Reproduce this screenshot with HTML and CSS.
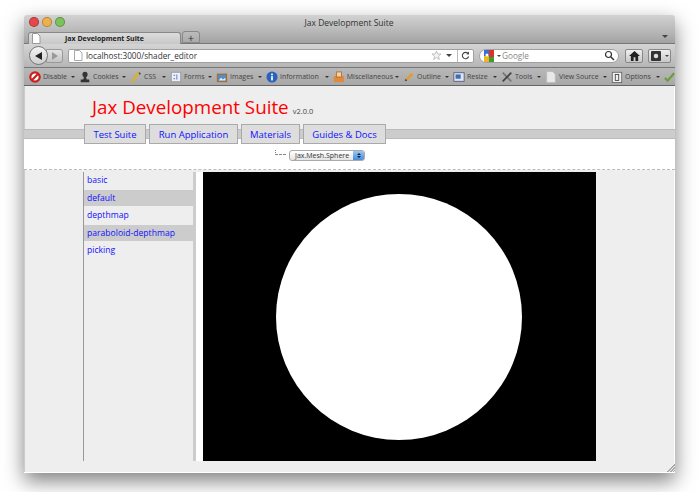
FILE: index.html
```html
<!DOCTYPE html>
<html lang="en">
<head>
  <meta charset="UTF-8" />
  <title>Jax Development Suite</title>
  <link rel="stylesheet" href="styles.css">
</head>
<body>
  <div class="window">
    <div class="titlebar">
      <div class="lights"><span class="light red"></span><span class="light amber"></span><span class="light green"></span></div>
      <div class="win-title">Jax Development Suite</div>
    </div>
    <div class="tabstrip">
      <div class="tab">
        <svg class="page-icon" width="10" height="11" viewBox="0 0 10 11"><path d="M1.500.5h5L9 3v7.500H1.500z" fill="#fff" stroke="#999"/></svg>
        <span class="tab-label">Jax Development Suite</span>
      </div>
      <div class="newtab">+</div>
      <div class="tab-menu"></div>
    </div>
    <div class="navbar">
      <div class="backfwd">
        <div class="back"><svg width="10" height="10" viewBox="0 0 10 10"><path d="M8 1v8L1 5z" fill="#222"/></svg></div>
        <div class="fwd"><svg width="8" height="8" viewBox="0 0 8 8"><path d="M1 0v8l6-4z" fill="#999"/></svg></div>
      </div>
      <div class="urlbar">
        <svg class="page-icon" width="10" height="11" viewBox="0 0 10 11"><path d="M1.500.5h5L9 3v7.500H1.500z" fill="#fff" stroke="#aaa"/></svg>
        <span class="url">localhost:3000/shader_editor</span>
        <svg width="11" height="11" viewBox="0 0 11 11"><path d="M5.500 1l1.300 3h3.200L7.500 6.200l.9 3.300-2.900-1.900-2.900 1.900.9-3.300L1 4h3.200z" fill="#f4f4f4" stroke="#aaa" stroke-width=".7"/></svg>
        <span class="caret"></span>
        <span class="reload"><svg width="9" height="9" viewBox="0 0 9 9"><path d="M7 2.500A3.200 3.200 0 1 0 7.600 5.500" fill="none" stroke="#444" stroke-width="1.100"/><path d="M5.200 3.200L8 3.600V.6z" fill="#444"/></svg></span>
      </div>
      <div class="search">
        <svg width="12" height="12" viewBox="0 0 12 12"><rect x="1" width="5" height="6" fill="#3a6fd8"/><rect x="6" width="5" height="7" fill="#d8352a"/><rect x="1" y="6" width="5" height="6" fill="#f0b428"/><rect x="6" y="7" width="5" height="5" fill="#3f9c35"/><circle cx="4" cy="5" r="1.500" fill="#fff"/></svg>
        <span class="caret small"></span>
        <span class="search-text">Google</span>
        <svg class="lens" width="11" height="11" viewBox="0 0 11 11"><circle cx="4.500" cy="4.500" r="3" fill="none" stroke="#333" stroke-width="1.200"/><path d="M7 7l3 3" stroke="#333" stroke-width="1.500"/></svg>
      </div>
      <div class="navbtn home"><svg width="11" height="10" viewBox="0 0 12 11"><path d="M6 0L0 5.500h2V11h3V7h2v4h3V5.500h2z" fill="#222"/></svg></div>
      <div class="navbtn addon"><svg width="10" height="10" viewBox="0 0 11 11"><rect width="11" height="11" rx="1" fill="#333"/><circle cx="5.500" cy="5.500" r="2.500" fill="#ddd"/></svg><span class="caret small"></span></div>
    </div>
    <div class="devbar">
      <div class="dev w-disable"><svg width="12" height="12" viewBox="0 0 14 14"><circle cx="7" cy="7" r="5.500" fill="#fff" stroke="#c8231c" stroke-width="2.600"/><path d="M3 11l8-8" stroke="#c8231c" stroke-width="2.600"/></svg><span>Disable</span><i></i></div>
      <div class="dev w-cookies"><svg width="12" height="12" viewBox="0 0 14 14"><circle cx="7" cy="4" r="3" fill="#333"/><path d="M6 6h2l1 4h3v3H2v-3h3z" fill="#333"/></svg><span>Cookies</span><i></i></div>
      <div class="dev w-css"><svg width="12" height="12" viewBox="0 0 14 14"><path d="M2 13L10 2" stroke="#e0b020" stroke-width="2.400"/><path d="M10 1l3 2-2 2z" fill="#555"/><path d="M3 4l1 1M8 10l1 1" stroke="#c9a020"/></svg><span>CSS</span><i></i></div>
      <div class="dev w-forms"><svg width="12" height="12" viewBox="0 0 14 14"><rect x="1.500" y="1.500" width="11" height="11" fill="#eef" stroke="#999"/><path d="M4 5h2M4 9h2M8 4v6" stroke="#446fb0"/></svg><span>Forms</span><i></i></div>
      <div class="dev w-images"><svg width="12" height="12" viewBox="0 0 14 14"><rect x="1" y="3" width="12" height="10" fill="#a86b2c"/><rect x="2.500" y="4.500" width="9" height="7" fill="#4f8fd0"/><path d="M3 11l3-3 2 2 3-2v3z" fill="#e6eef5"/></svg><span>Images</span><i></i></div>
      <div class="dev w-info"><svg width="12" height="12" viewBox="0 0 14 14"><circle cx="7" cy="7" r="6.500" fill="#2a62c0"/><rect x="6" y="6" width="2" height="5" fill="#fff"/><rect x="6" y="3" width="2" height="2" fill="#fff"/></svg><span>Information</span><i></i></div>
      <div class="dev w-misc"><svg width="12" height="12" viewBox="0 0 14 14"><rect x="1" y="6" width="12" height="7" fill="#e08a3c"/><rect x="4" y="1" width="6" height="6" fill="#f2d2a8" stroke="#b06a2a"/></svg><span>Miscellaneous</span><i></i></div>
      <div class="dev w-outline"><svg width="12" height="12" viewBox="0 0 14 14"><path d="M2 12l1-3 7-7 2 2-7 7z" fill="#e79a2c"/><path d="M2 12l1-3 2 2z" fill="#444"/></svg><span>Outline</span><i></i></div>
      <div class="dev w-resize"><svg width="12" height="12" viewBox="0 0 14 14"><rect x="1" y="2" width="12" height="10" fill="#dfe6f2" stroke="#557"/><rect x="3" y="4" width="6" height="5" fill="#3a70b8"/></svg><span>Resize</span><i></i></div>
      <div class="dev w-tools"><svg width="12" height="12" viewBox="0 0 14 14"><path d="M2 2l10 10" stroke="#777" stroke-width="2"/><path d="M12 2L2 12" stroke="#444" stroke-width="2"/></svg><span>Tools</span><i></i></div>
      <div class="dev w-source"><svg width="12" height="12" viewBox="0 0 12 14"><path d="M1 .5h7L11 4v9.500H1z" fill="#e8e8e8" stroke="#bbb"/></svg><span>View Source</span><i></i></div>
      <div class="dev w-options"><svg width="12" height="12" viewBox="0 0 12 14"><rect x=".5" y="1.500" width="11" height="12" fill="#eee" stroke="#666"/><rect x="4" y="4" width="4" height="7" fill="none" stroke="#444"/></svg><span>Options</span><i></i></div>
      <svg class="check" width="12" height="12" viewBox="0 0 12 12"><path d="M1 7l3 3 7-8" fill="none" stroke="#6a9f35" stroke-width="2.400"/></svg>
    </div>
    <div class="page">
      <header class="head">
        <h1>Jax Development Suite</h1>
        <small>v2.0.0</small>
      </header>
      <nav class="menu">
        <a class="menu-item w-test">Test Suite</a>
        <a class="menu-item w-run">Run Application</a>
        <a class="menu-item w-mat">Materials</a>
        <a class="menu-item w-docs">Guides &amp; Docs</a>
      </nav>
      <div class="picker">
        <span class="tree"></span>
        <div class="select"><span>Jax.Mesh.Sphere</span><b class="stepper"><i class="up"></i><i class="down"></i></b></div>
      </div>
      <div class="main">
        <ul class="list">
          <li>basic</li>
          <li class="on">default</li>
          <li>depthmap</li>
          <li class="on">paraboloid-depthmap</li>
          <li>picking</li>
        </ul>
        <div class="gutter"></div>
        <div class="canvas"><div class="ball"></div></div>
      </div>
      <div class="grip"></div>
    </div>
  </div>
</body>
</html>
```

FILE: styles.css
```css
html, body {
  margin: 0;
  height: 492px;
  overflow: hidden;
  background: #fff;
}
body {
  padding: 15px 25px 0 24px;
  box-sizing: border-box;
  font-family: "Open Sans", "DejaVu Sans", sans-serif;
}
.window {
  height: 458px;
  display: flex;
  flex-direction: column;
  border-radius: 3px 3px 0 0;
  box-shadow: 0 8px 20px rgba(0,0,0,0.5);
  overflow: hidden;
}
.titlebar {
  height: 16px;
  flex: none;
  display: flex;
  position: relative;
  background: linear-gradient(#d2d2d2, #b8b8b8);
}
.lights {
  display: flex;
  gap: 4px;
  padding: 2px 0 0 5px;
}
.light {
  width: 10px;
  height: 10px;
  box-sizing: border-box;
  border-radius: 50%;
  border: 1px solid rgba(0,0,0,0.25);
  margin-right: -1px;
}
.red { background: #e5484a; }
.amber { background: #f0b04a; }
.green { background: #7cc25c; }
.win-title {
  position: absolute;
  left: 0;
  right: 0;
  top: 1px;
  padding-right: 1px;
  text-align: center;
  font-size: 8.500px;
  line-height: 13px;
  color: #333;
}
.tabstrip {
  height: 12px;
  flex: none;
  display: flex;
  align-items: flex-end;
  gap: 1px;
  padding-left: 4px;
  position: relative;
  background: linear-gradient(#b8b8b8, #a2a2a2);
  border-bottom: 1px solid #777;
}
.tab {
  width: 153px;
  height: 12px;
  margin-bottom: -1px;
  display: flex;
  align-items: center;
  gap: 24px;
  padding-left: 2px;
  box-sizing: border-box;
  background: linear-gradient(#dcdcdc, #c8c8c8);
  border: 1px solid #888;
  border-bottom: 0;
  border-radius: 3px 3px 0 0;
}
.tab-label {
  font-size: 7px;
  font-weight: 700;
  color: #222;
}
.newtab {
  width: 18px;
  height: 12px;
  font-size: 11px;
  line-height: 11px;
  text-align: center;
  color: #333;
  box-sizing: border-box;
  background: linear-gradient(#bcbcbc, #aaa);
  border: 1px solid #888;
  border-radius: 3px 3px 0 0;
}
.tab-menu {
  position: absolute;
  right: 7px;
  bottom: 5px;
  border: 3px solid transparent;
  border-top-color: #444;
  border-bottom: 0;
}
.navbar {
  height: 24px;
  flex: none;
  display: flex;
  align-items: center;
  padding-left: 5px;
  background: linear-gradient(#d4d4d4, #b6b6b6);
  border-bottom: 1px solid #777;
  box-sizing: border-box;
}
.backfwd {
  display: flex;
  align-items: center;
}
.back {
  width: 19px;
  height: 19px;
  box-sizing: border-box;
  border-radius: 50%;
  display: flex;
  align-items: center;
  justify-content: center;
  background: linear-gradient(#f4f4f4, #cfcfcf);
  border: 1px solid #777;
  position: relative;
  z-index: 1;
}
.fwd {
  width: 17px;
  height: 14px;
  margin-left: -2px;
  display: flex;
  align-items: center;
  justify-content: center;
  background: linear-gradient(#e4e4e4, #c4c4c4);
  border: 1px solid #999;
  border-radius: 0 3px 3px 0;
  box-sizing: border-box;
}
.urlbar {
  width: 406px;
  height: 14px;
  margin-left: 5px;
  display: flex;
  align-items: center;
  padding: 0 1px 0 4px;
  box-sizing: border-box;
  background: #fff;
  border: 1px solid #a0a0a0;
  border-radius: 2px;
}
.url {
  flex: 1;
  margin-left: 3px;
  font-size: 8.200px;
  color: #333;
}
.caret {
  border: 3px solid transparent;
  border-top-color: #444;
  border-bottom: 0;
  margin: 0 5px 0 4px;
}
.caret.small {
  margin: 0 0 0 2px;
  border-width: 2px;
  border-bottom: 0;
}
.reload {
  height: 12px;
  display: flex;
  align-items: center;
  padding: 0 2px 0 3px;
  border-left: 1px solid #bbb;
}
.search {
  width: 140px;
  height: 14px;
  margin-left: 5px;
  display: flex;
  align-items: center;
  padding: 0 3px;
  box-sizing: border-box;
  background: #fff;
  border: 1px solid #a0a0a0;
  border-radius: 7px;
}
.search-text {
  flex: 1;
  margin-left: 1px;
  font-size: 8.200px;
  color: #888;
}
.navbtn {
  height: 14px;
  margin-left: 5px;
  display: flex;
  align-items: center;
  justify-content: center;
  gap: 2px;
  box-sizing: border-box;
  background: linear-gradient(#efefef, #c8c8c8);
  border: 1px solid #888;
  border-radius: 2px;
}
.home { width: 18px; margin-left: 6px; }
.addon { width: 23px; }
.devbar {
  height: 18px;
  flex: none;
  display: flex;
  align-items: center;
  padding: 0 0 0 5px;
  box-sizing: border-box;
  background: linear-gradient(#b8b8b8, #a8a8a8);
  border-bottom: 1px solid #666;
}
.dev {
  display: flex;
  align-items: center;
  gap: 2px;
  flex: none;
  white-space: nowrap;
  font-size: 7px;
  color: #444;
}
.dev i {
  margin-left: auto;
  margin-right: 4px;
  border: 2px solid transparent;
  border-top-color: #333;
  border-bottom: 0;
}
.w-disable { width: 50px; }
.w-cookies { width: 51px; }
.w-css { width: 40px; }
.w-forms { width: 46px; }
.w-images { width: 50px; }
.w-info { width: 67px; }
.w-misc { width: 70px; }
.w-outline { width: 50px; }
.w-resize { width: 48px; }
.w-tools { width: 44px; }
.w-source { width: 66px; }
.w-options { width: 53px; }
.page {
  flex: 1;
  min-height: 0;
  position: relative;
  display: flex;
  flex-direction: column;
  background: #eee;
  border-bottom: 1px solid #fff;
  box-shadow: inset 1px 0 0 #ccc, inset -1px 0 0 #fff;
}
.head {
  height: 43px;
  flex: none;
  padding: 9px 0 0 68px;
  box-sizing: border-box;
  display: flex;
  align-items: baseline;
  gap: 4px;
}
h1 {
  margin: 0;
  font-size: 18.800px;
  line-height: 24px;
  font-weight: 400;
  color: #f00;
}
small {
  font-size: 7.500px;
  color: #444;
}
.menu {
  height: 10px;
  flex: none;
  padding-left: 60px;
  display: flex;
  gap: 3px;
  position: relative;
  z-index: 1;
  background: #ccc;
  border-top: 1px solid #bbb;
  border-bottom: 1px solid #bbb;
  box-sizing: border-box;
}
.menu-item {
  height: 20px;
  margin-top: -6px;
  line-height: 20px;
  text-align: center;
  font-size: 9.500px;
  color: #11f;
  background: #ddd;
  border: 1px solid #aaa;
  box-sizing: border-box;
}
.w-test { width: 62px; }
.w-run { width: 89px; }
.w-mat { width: 59px; }
.w-docs { width: 83px; }
.picker {
  height: 31px;
  flex: none;
  padding: 11px 0 0 251px;
  box-sizing: border-box;
  background: #fff;
  border-bottom: 1px dashed #bbb;
  display: flex;
  align-items: flex-start;
  gap: 3px;
}
.tree {
  width: 11px;
  height: 5px;
  box-sizing: border-box;
  border-left: 1px dotted #888;
  border-bottom: 1px dashed #888;
}
.select {
  width: 76px;
  height: 11px;
  display: flex;
  align-items: center;
  justify-content: space-between;
  font-size: 7px;
  color: #333;
  box-sizing: border-box;
  padding-left: 5px;
  background: linear-gradient(#fff, #e4e4e4);
  border: 1px solid #aaa;
  border-radius: 3px;
  overflow: hidden;
}
.stepper {
  width: 11px;
  height: 11px;
  display: flex;
  flex-direction: column;
  align-items: center;
  justify-content: center;
  gap: 1px;
  background: linear-gradient(#a4ccf4, #3f84dc);
}
.stepper i {
  border: 2px solid transparent;
}
.stepper .up { border-bottom-color: #123; border-top: 0; }
.stepper .down { border-top-color: #123; border-bottom: 0; }
.main {
  flex: 1;
  min-height: 0;
  display: flex;
  padding: 2px 0 11px 59px;
}
.list {
  width: 109px;
  margin: 0;
  padding: 0;
  list-style: none;
  border-left: 1px solid #999;
  border-right: 3px solid #ccc;
  font-size: 8.600px;
}
.list li {
  height: 16px;
  margin-bottom: 1.500px;
  padding-left: 3px;
  line-height: 16px;
  color: #11f;
}
.list li.on { background: #ccc; }
.gutter {
  width: 7px;
  background: #fff;
}
.canvas {
  width: 393px;
  height: 289px;
  padding-right: 2px;
  background: #000;
  display: flex;
  align-items: center;
  justify-content: center;
  box-sizing: border-box;
}
.ball {
  width: 246px;
  height: 246px;
  flex: none;
  border-radius: 50%;
  background: #fff;
}
.grip {
  position: absolute;
  right: 0;
  bottom: 0;
  width: 9px;
  height: 9px;
  background: repeating-linear-gradient(135deg, #eee 0 1px, #aaa 1px 2px);
  clip-path: polygon(100% 0, 100% 100%, 0 100%);
}
```
